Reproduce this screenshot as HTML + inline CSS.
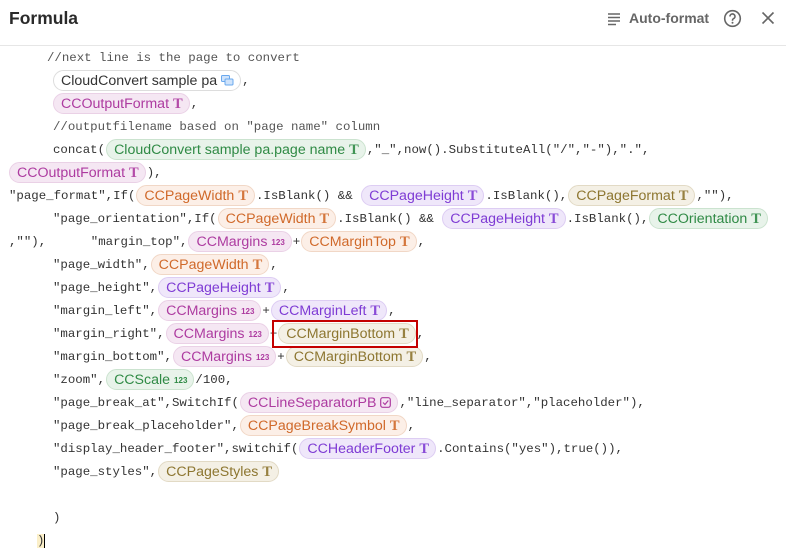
<!DOCTYPE html>
<html><head><meta charset="utf-8"><style>
*{margin:0;padding:0;box-sizing:border-box}
body{width:786px;height:560px;background:#fff;position:relative;overflow:hidden;font-family:"Liberation Sans",sans-serif}
.hd{position:absolute;left:0;top:0;width:786px;height:46px;border-bottom:1px solid #e6e6e6}
.title{position:absolute;left:9px;top:8px;font-size:17.5px;font-weight:bold;color:#2a2a2a}
.af{position:absolute;left:629px;top:10px;font-size:14px;font-weight:bold;color:#666}
.l{position:absolute;height:23px;line-height:23px;white-space:pre;font-family:"Liberation Mono",monospace;font-size:12.4px;color:#333}
.c{display:inline-block;height:21px;line-height:20px;border-radius:11px;border:1px solid;padding:0 6px 0 7px;font-family:"Liberation Sans",sans-serif;font-size:14.2px;vertical-align:middle;margin:0 1px}
.t{font-family:"Liberation Serif",serif;font-weight:bold;font-size:14.5px;margin-left:4px;opacity:.9}
.n{font-size:8px;font-weight:bold;margin-left:4px;vertical-align:1px}
.w{background:#fff;border-color:#ddd;color:#333}
.m{background:#f5e7f3;border-color:#ead1e6;color:#ad3ba0}
.g{background:#e8f3ea;border-color:#cbe3cf;color:#2f8a45}
.o{background:#fcefe7;border-color:#f1d7c6;color:#d0692a}
.p{background:#efe7fa;border-color:#ddcdf3;color:#7e3bd4}
.y{background:#f4f0e5;border-color:#e2dac5;color:#8d7630}
.cm{color:#555}
</style></head><body>
<div class="hd">
<div class="title">Formula</div>
<svg style="position:absolute;left:607px;top:12px" width="14" height="14" viewBox="0 0 14 14"><g stroke="#666" stroke-width="1.5"><line x1="1" y1="2" x2="13" y2="2"/><line x1="1" y1="5.5" x2="13" y2="5.5"/><line x1="1" y1="9" x2="13" y2="9"/><line x1="1" y1="12.5" x2="9" y2="12.5"/></g></svg>
<div class="af">Auto-format</div>
<svg style="position:absolute;left:723px;top:9px" width="19" height="19" viewBox="0 0 19 19"><circle cx="9.5" cy="9.5" r="7.8" fill="none" stroke="#666" stroke-width="1.6"/><path d="M7 7.5a2.5 2.5 0 1 1 3.3 2.3c-.6.3-.8.7-.8 1.4v.5" fill="none" stroke="#666" stroke-width="1.6"/><circle cx="9.5" cy="13.8" r="1" fill="#666"/></svg>
<svg style="position:absolute;left:761px;top:11px" width="14" height="14" viewBox="0 0 14 14"><path d="M1.5 1.5L12.5 12.5M12.5 1.5L1.5 12.5" stroke="#666" stroke-width="1.6"/></svg>
</div>

<div class="l cm" style="left:47px;top:47px">//next line is the page to convert</div>
<div class="l" style="left:53px;top:70px"><span class="c w" style="margin-left:0">CloudConvert sample pa<svg style="margin-left:4px;vertical-align:-1px" width="13" height="11" viewBox="0 0 13 11"><rect x="0.5" y="0.5" width="8" height="6" rx="1" fill="#cfe3fb" stroke="#6aa8ee"/><rect x="4" y="4" width="8" height="6" rx="1" fill="#cfe3fb" stroke="#6aa8ee"/></svg></span>,</div>
<div class="l" style="left:53px;top:93px"><span class="c m" style="margin-left:0">CCOutputFormat<span class="t">T</span></span>,</div>
<div class="l cm" style="left:53px;top:116px">//outputfilename based on "page name" column</div>
<div class="l" style="left:53px;top:139px">concat(<span class="c g">CloudConvert sample pa.page name<span class="t">T</span></span>,"_",now().SubstituteAll("/","-"),".",</div>
<div class="l" style="left:9px;top:162px"><span class="c m" style="margin-left:0">CCOutputFormat<span class="t">T</span></span>),</div>
<div class="l" style="left:9px;top:185px">"page_format",If(<span class="c o">CCPageWidth<span class="t">T</span></span>.IsBlank() &amp;&amp; <span class="c p">CCPageHeight<span class="t">T</span></span>.IsBlank(),<span class="c y">CCPageFormat<span class="t">T</span></span>,""),</div>
<div class="l" style="left:53px;top:208px">"page_orientation",If(<span class="c o">CCPageWidth<span class="t">T</span></span>.IsBlank() &amp;&amp; <span class="c p">CCPageHeight<span class="t">T</span></span>.IsBlank(),<span class="c g">CCOrientation<span class="t">T</span></span></div>
<div class="l" style="left:9px;top:231px">,""),      "margin_top",<span class="c m">CCMargins<span class="n">123</span></span>+<span class="c o">CCMarginTop<span class="t">T</span></span>,</div>
<div class="l" style="left:53px;top:254px">"page_width",<span class="c o">CCPageWidth<span class="t">T</span></span>,</div>
<div class="l" style="left:53px;top:277px">"page_height",<span class="c p">CCPageHeight<span class="t">T</span></span>,</div>
<div class="l" style="left:53px;top:300px">"margin_left",<span class="c m">CCMargins<span class="n">123</span></span>+<span class="c p">CCMarginLeft<span class="t">T</span></span>,</div>
<div class="l" style="left:53px;top:323px">"margin_right",<span class="c m">CCMargins<span class="n">123</span></span>+<span class="c y">CCMarginBottom<span class="t">T</span></span>,</div>
<div class="l" style="left:53px;top:346px">"margin_bottom",<span class="c m">CCMargins<span class="n">123</span></span>+<span class="c y">CCMarginBottom<span class="t">T</span></span>,</div>
<div class="l" style="left:53px;top:369px">"zoom",<span class="c g">CCScale<span class="n">123</span></span>/100,</div>
<div class="l" style="left:53px;top:392px">"page_break_at",SwitchIf(<span class="c m">CCLineSeparatorPB<svg style="margin-left:4px;vertical-align:-1px" width="11" height="11" viewBox="0 0 11 11"><rect x="0.7" y="0.7" width="9.6" height="9.6" rx="2" fill="none" stroke="#ad3ba0" stroke-width="1.2"/><path d="M3 5.5l2 2 3.3-4" fill="none" stroke="#ad3ba0" stroke-width="1.2"/></svg></span>,"line_separator","placeholder"),</div>
<div class="l" style="left:53px;top:415px">"page_break_placeholder",<span class="c o">CCPageBreakSymbol<span class="t">T</span></span>,</div>
<div class="l" style="left:53px;top:438px">"display_header_footer",switchif(<span class="c p">CCHeaderFooter<span class="t">T</span></span>.Contains("yes"),true()),</div>
<div class="l" style="left:53px;top:461px">"page_styles",<span class="c y">CCPageStyles<span class="t">T</span></span></div>
<div class="l" style="left:53px;top:507px">)</div>
<div class="l" style="left:37px;top:530px"><span style="background:#fbefc8">)</span><span style="border-left:1px solid #000;margin-left:0"></span></div>
<div style="position:absolute;left:272px;top:320px;width:146px;height:28px;border:2px solid #c40000"></div>
</body></html>
